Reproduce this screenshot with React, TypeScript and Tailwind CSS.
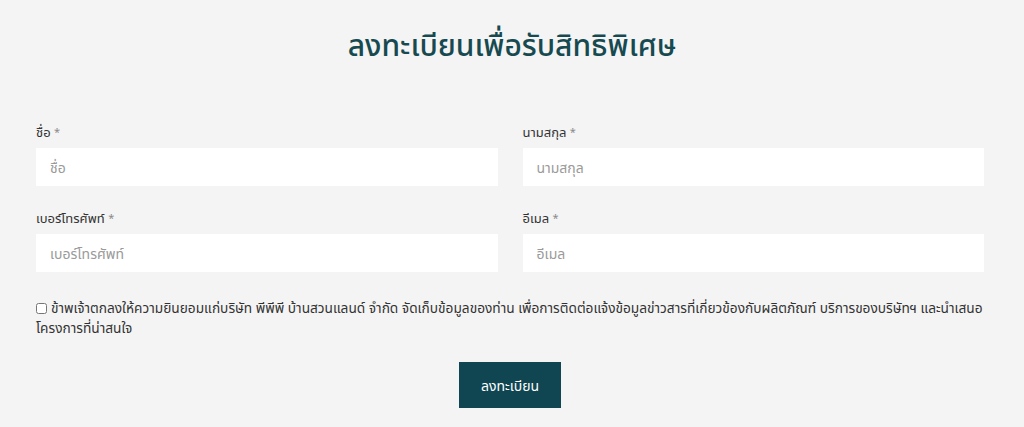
import React from "react";

function Field({ label, placeholder }: { label: string; placeholder: string }) {
  return (
    <div className="flex flex-col">
      <label className="text-[13px] leading-[16px] text-[#333333] h-[16px] mt-[3px] mb-[8px]">
        {label} <span className="text-[11px] text-[#8a8a8a] align-[1px]">*</span>
      </label>
      <input
        className="h-[38px] bg-white px-[14px] text-[14px] text-[#333] placeholder:text-[#9a9a9a] outline-none border-0"
        placeholder={placeholder}
        style={{ fontFamily: "inherit" }}
      />
    </div>
  );
}

export default function App() {
  return (
    <div
      className="w-[1024px] h-[427px] bg-[#f4f4f4] overflow-hidden"
      style={{ fontFamily: '"Noto Sans", "Noto Sans Thai", sans-serif' }}
    >
      <h1 className="text-center text-[30px] leading-[40px] pt-[25px] text-[#174a50] font-medium">
        ลงทะเบียนเพื่อรับสิทธิพิเศษ
      </h1>
      <div className="ml-[36px] w-[948px] mt-[56px]">
        <div className="grid grid-cols-2 gap-x-[25px] gap-y-[21px]">
          <Field label="ชื่อ" placeholder="ชื่อ" />
          <Field label="นามสกุล" placeholder="นามสกุล" />
          <Field label="เบอร์โทรศัพท์" placeholder="เบอร์โทรศัพท์" />
          <Field label="อีเมล" placeholder="อีเมล" />
        </div>
        <p className="mt-[26px] text-[13.7px] leading-[20px] text-[#333333] whitespace-nowrap">
          <input type="checkbox" className="w-[11px] h-[11px] mr-[4px] align-[-1px]" />
          ข้าพเจ้าตกลงให้ความยินยอมแก่บริษัท พีพีพี บ้านสวนแลนด์ จำกัด จัดเก็บข้อมูลของท่าน เพื่อการติดต่อแจ้งข้อมูลข่าวสารที่เกี่ยวข้องกับผลิตภัณฑ์ บริการของบริษัทฯ และนำเสนอ
          <br />
          โครงการที่น่าสนใจ
        </p>
        <div className="flex justify-center mt-[24px]">
          <button className="w-[102px] h-[46px] bg-[#0f4651] text-white text-[14px]">
            ลงทะเบียน
          </button>
        </div>
      </div>
    </div>
  );
}
